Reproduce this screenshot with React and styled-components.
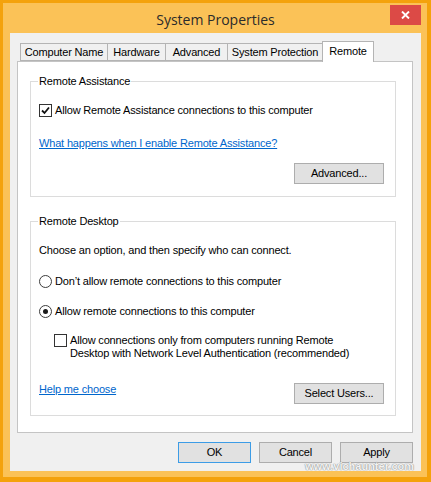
import { createGlobalStyle, styled } from 'styled-components';

const GlobalStyle = createGlobalStyle`
  html, body {
    margin: 0;
    padding: 0;
    background: #f3a10d;
  }
  * {
    box-sizing: border-box;
  }
`;

const Window = styled.div`
  position: relative;
  width: 431px;
  height: 482px;
  display: flex;
  flex-direction: column;
  background: #fbc257;
  border-style: solid;
  border-color: #f4a20c;
  border-width: 3px 4px 5px 3px;
  font-family: 'Liberation Sans', Arial, sans-serif;
  font-size: 11px;
  letter-spacing: -0.17px;
  color: #000;
`;

const TitleBar = styled.div`
  height: 30px;
  display: grid;
  grid-template-columns: 1fr auto 1fr;
  align-items: start;
  padding: 2px 6px 0 7px;
`;

const Title = styled.div`
  grid-column: 2;
  font-family: 'Open Sans', 'Noto Sans', sans-serif;
  font-size: 14px;
  letter-spacing: 0;
  line-height: 20px;
  margin-top: 5px;
  color: #2b2b2b;
`;

const CloseButton = styled.div`
  grid-column: 3;
  justify-self: end;
  width: 31px;
  height: 20px;
  background: #dc4a46;
  display: flex;
  align-items: center;
  justify-content: center;
`;

const Client = styled.div`
  flex: 1;
  margin: 0 6px 6px 7px;
  background: #f0f0f0;
  display: flex;
  flex-direction: column;
  padding: 8px 8px 8px 7px;
`;

const TabStrip = styled.div`
  display: flex;
  align-items: flex-end;
  padding-left: 3px;
  margin-bottom: -1px;
  position: relative;
  z-index: 1;
`;

const Tab = styled.div`
  width: ${({ $w }) => $w}px;
  height: ${({ $active }) => ($active ? 21 : 18)}px;
  margin-left: -1px;
  margin-bottom: ${({ $active }) => ($active ? 0 : 1)}px;
  border: 1px solid #b4b4b4;
  border-bottom: ${({ $active }) => ($active ? 'none' : '1px solid #b4b4b4')};
  background: ${({ $active }) => ($active ? '#fff' : '#f0f0f0')};
  display: flex;
  justify-content: center;
  align-items: ${({ $active }) => ($active ? 'flex-start' : 'center')};
  padding-top: ${({ $active }) => ($active ? 3 : 0)}px;
  line-height: 13px;
  white-space: nowrap;
  &:first-child {
    margin-left: 0;
  }
`;

const Panel = styled.div`
  flex: 1;
  background: #fff;
  border: 1px solid #c4c4c4;
  padding: 19px 16px 0 12px;
  display: flex;
  flex-direction: column;
`;

const Group = styled.div`
  position: relative;
  border: 1px solid #dcdcdc;
  display: flex;
  flex-direction: column;
  padding: ${({ $pad }) => $pad};
  margin-top: ${({ $mt }) => $mt || 0}px;
`;

const GroupTitle = styled.span`
  position: absolute;
  top: -7px;
  left: 7px;
  padding: 0 1px;
  background: #fff;
  line-height: 13px;
`;

const Row = styled.div`
  display: flex;
  align-items: flex-start;
  line-height: 13px;
  margin-top: ${({ $mt }) => $mt || 0}px;
  margin-left: ${({ $indent }) => $indent || 0}px;
`;

const Text = styled.div`
  line-height: 13px;
  margin-top: ${({ $mt }) => $mt || 0}px;
`;

const Link = styled.a`
  color: #0066cc;
  text-decoration: underline;
  line-height: 13px;
  cursor: pointer;
  align-self: flex-start;
  margin-top: ${({ $mt }) => $mt || 0}px;
`;

const Box = styled.span`
  flex: none;
  width: 13px;
  height: 13px;
  margin-right: 3px;
  border: 1px solid #333;
  background: #fff;
  display: flex;
  align-items: center;
  justify-content: center;
`;

const Radio = styled.span`
  flex: none;
  width: 13px;
  height: 13px;
  margin-right: 3px;
  border: 1px solid #3c3c3c;
  border-radius: 50%;
  background: #fff;
  display: flex;
  align-items: center;
  justify-content: center;
  &::after {
    content: '';
    display: ${({ $on }) => ($on ? 'block' : 'none')};
    width: 5px;
    height: 5px;
    border-radius: 50%;
    background: #1a1a1a;
  }
`;

const Button = styled.div`
  width: ${({ $w }) => $w}px;
  height: 21px;
  background: #e1e1e1;
  border: 1px solid ${({ $default }) => ($default ? '#3c9ce6' : '#adadad')};
  display: flex;
  align-items: center;
  justify-content: center;
  line-height: 13px;
`;

const RightButton = styled(Button)`
  align-self: flex-end;
  margin-top: ${({ $mt }) => $mt || 0}px;
`;

const BottomRow = styled.div`
  display: flex;
  justify-content: space-between;
  align-items: center;
  margin-top: ${({ $mt }) => $mt}px;
`;

const DialogButtons = styled.div`
  display: flex;
  justify-content: flex-end;
  gap: 8px;
  margin-top: 9px;
`;

const Watermark = styled.div`
  position: absolute;
  right: 13px;
  bottom: 5px;
  font-size: 11px;
  font-weight: bold;
  letter-spacing: 0;
  color: #f2f2f2;
  text-shadow: 0 0 1px #8a8a8a, 0 0 1px #8a8a8a;
  line-height: 11px;
`;

function CheckBox({ checked }) {
  return (
    <Box>
      {checked && (
        <svg width="9" height="9" viewBox="0 0 9 9">
          <path d="M1 4.5 L3.5 7 L8 1.5" fill="none" stroke="#111" strokeWidth="1.8" />
        </svg>
      )}
    </Box>
  );
}

const tabs = [
  { label: 'Computer Name', w: 88 },
  { label: 'Hardware', w: 59 },
  { label: 'Advanced', w: 63 },
  { label: 'System Protection', w: 96 },
  { label: 'Remote', w: 52, active: true },
];

export default function App() {
  return (
    <Window>
      <GlobalStyle />
      <TitleBar>
        <Title>System Properties</Title>
        <CloseButton>
          <svg width="9" height="8" viewBox="0 0 9 8">
            <path d="M1 0.5 L8 7.5 M8 0.5 L1 7.5" stroke="#fff" strokeWidth="1.9" />
          </svg>
        </CloseButton>
      </TitleBar>
      <Client>
        <TabStrip>
          {tabs.map((t) => (
            <Tab key={t.label} $w={t.w} $active={t.active}>
              {t.label}
            </Tab>
          ))}
        </TabStrip>
        <Panel>
          <Group $pad="22px 11px 12px 8px">
            <GroupTitle>Remote Assistance</GroupTitle>
            <Row>
              <CheckBox checked />
              Allow Remote Assistance connections to this computer
            </Row>
            <Link $mt={20}>What happens when I enable Remote Assistance?</Link>
            <RightButton $w={90} $mt={13}>Advanced...</RightButton>
          </Group>
          <Group $pad="22px 11px 11px 8px" $mt={24}>
            <GroupTitle>Remote Desktop</GroupTitle>
            <Text>Choose an option, and then specify who can connect.</Text>
            <Row $mt={18}>
              <Radio />
              Don’t allow remote connections to this computer
            </Row>
            <Row $mt={17}>
              <Radio $on />
              Allow remote connections to this computer
            </Row>
            <Row $mt={16} $indent={15}>
              <CheckBox />
              Allow connections only from computers running Remote
              <br />
              Desktop with Network Level Authentication (recommended)
            </Row>
            <BottomRow $mt={23}>
              <Link>Help me choose</Link>
              <Button $w={90}>Select Users...</Button>
            </BottomRow>
          </Group>
        </Panel>
        <DialogButtons>
          <Button $w={73} $default>OK</Button>
          <Button $w={73}>Cancel</Button>
          <Button $w={73}>Apply</Button>
        </DialogButtons>
      </Client>
      <Watermark>www.vichaunter.com</Watermark>
    </Window>
  );
}
